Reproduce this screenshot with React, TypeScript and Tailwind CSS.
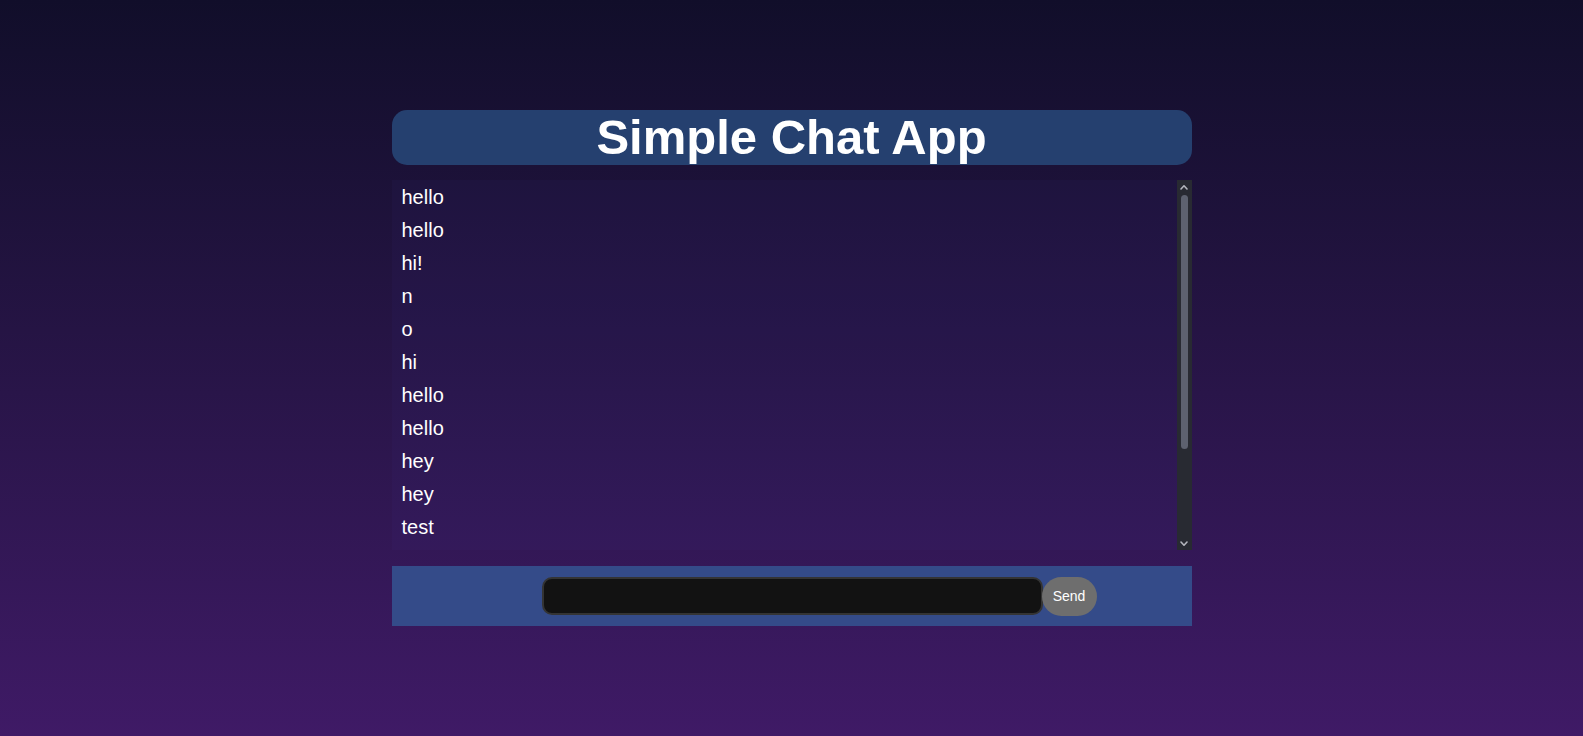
import React, { useState } from "react";

const initialMessages = [
  "hello",
  "hello",
  "hi!",
  "n",
  "o",
  "hi",
  "hello",
  "hello",
  "hey",
  "hey",
  "test",
  "hi",
  "yo",
  "test",
  "ok",
];

const Arrow = ({ down = false }: { down?: boolean }) => (
  <svg width="8" height="6" viewBox="0 0 8 6" className={down ? "rotate-180" : ""}>
    <path d="M1 5 L4 1.8 L7 5" fill="none" stroke="#b4b6bd" strokeWidth="1.6" strokeLinecap="round" strokeLinejoin="round" />
  </svg>
);

export default function App() {
  const [messages, setMessages] = useState<string[]>(initialMessages);
  const [text, setText] = useState("");

  const handleSend = (e: React.FormEvent) => {
    e.preventDefault();
    if (!text.trim()) return;
    setMessages((prev) => [...prev, text]);
    setText("");
  };

  return (
    <div className="min-h-screen w-full flex items-center justify-center bg-gradient-to-b from-[#110e2a] to-[#3f1a66] font-['Liberation_Sans',Arial,sans-serif] text-white">
      <div className="w-[800px] flex flex-col">
        {/* Header */}
        <div className="h-[55px] rounded-[15px] bg-[#25406f] flex items-center justify-center">
          <h1 className="text-[49px] leading-[55px] font-bold text-white">Simple Chat App</h1>
        </div>

        {/* Messages */}
        <div className="mt-[15px] h-[370px] flex bg-[rgba(70,60,170,0.06)]">
          <ul className="flex-1 overflow-y-auto [scrollbar-width:none]">
            {messages.map((msg, idx) => (
              <li key={idx} className="px-[10px] pt-[6px] pb-[4px] text-[20px] leading-[23px]">
                {msg}
              </li>
            ))}
          </ul>
          {/* scrollbar */}
          <div className="w-[15px] bg-[#282a32] flex flex-col items-center">
            <div className="h-[13px] flex items-center justify-center">
              <Arrow />
            </div>
            <div className="mt-[2px] w-[7px] h-[254px] rounded-full bg-[#5d616f]" />
            <div className="flex-1" />
            <div className="h-[13px] flex items-center justify-center">
              <Arrow down />
            </div>
          </div>
        </div>

        {/* Input bar */}
        <form
          onSubmit={handleSend}
          className="mt-[16px] h-[60px] bg-[#344b89] flex items-center justify-center pl-[55px]"
        >
          <input
            value={text}
            onChange={(e) => setText(e.target.value)}
            className="w-[501px] h-[38px] rounded-[10px] border-2 border-[#343434] bg-[#121212] px-3 text-white text-sm outline-none"
          />
          <button
            type="submit"
            className="-ml-[1px] w-[55px] h-[39px] rounded-full bg-[#6e6e6e] text-white text-[14px]"
          >
            Send
          </button>
        </form>
      </div>
    </div>
  );
}
